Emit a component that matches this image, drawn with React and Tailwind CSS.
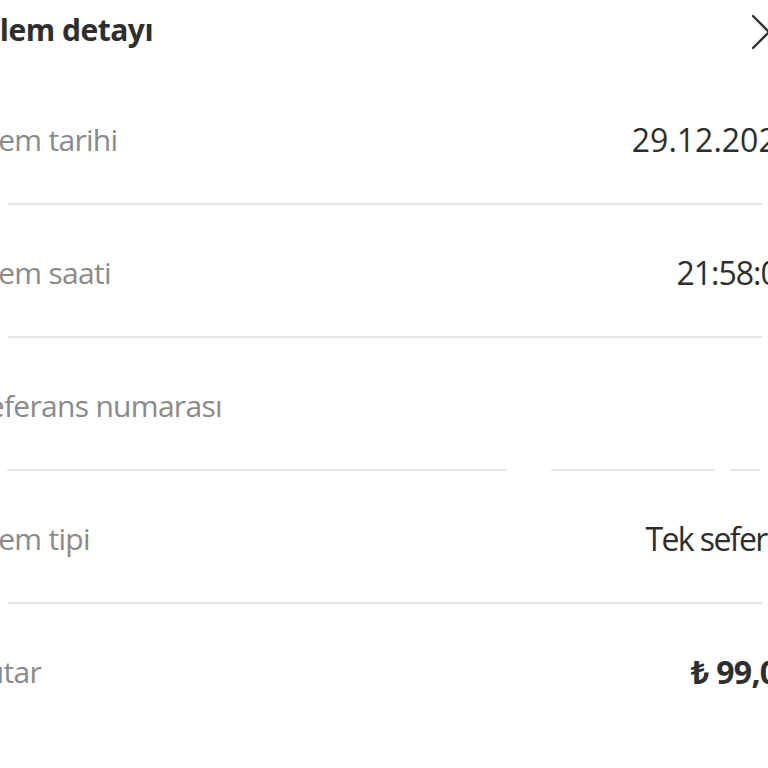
import React from "react";

const rows = [
  { label: "İşlem tarihi", value: "29.12.2024", vcls: "tracking-[0px]" },
  { label: "İşlem saati", value: "21:58:03", vcls: "tracking-[-1px]" },
  { label: "Referans numarası", value: "", gaps: true, vcls: "" },
  { label: "İşlem tipi", value: "Tek seferlik", vcls: "tracking-[-1.6px]" },
  { label: "Tutar", value: "₺ 99,00", bold: true, last: true, vcls: "tracking-[-0.7px]" },
];

function Divider({ gaps }) {
  if (gaps) {
    return (
      <div className="ml-[31px] mr-[35px] flex h-[2px]">
        <div className="h-[2px] w-[500px] bg-[#e6e6e6]" />
        <div className="h-[2px] w-[44px]" />
        <div className="h-[2px] w-[164px] bg-[#e6e6e6]" />
        <div className="h-[2px] w-[15px]" />
        <div className="h-[2px] flex-1 bg-[#e6e6e6]" />
      </div>
    );
  }
  return <div className="ml-[32px] mr-[33px] h-[2px] bg-[#e6e6e6]" />;
}

export default function App() {
  return (
    <div
      className="relative h-[768px] w-[768px] overflow-hidden bg-white"
      style={{ fontFamily: '"Open Sans", "Noto Sans", sans-serif' }}
    >
      <div className="ml-[-24px] w-[819px]">
        <div className="flex items-center justify-between pt-[10px] pb-[22px]">
          <div className="text-[30px] font-bold leading-[40px] tracking-[-0.5px] text-[#2e2e2e]">
            İşlem detayı
          </div>
          <svg className="mr-[8px] mt-[4px]" width="36" height="36" viewBox="0 0 36 36" fill="none">
            <path d="M2 2 L34 34 M34 2 L2 34" stroke="#333" strokeWidth="2.4" strokeLinecap="round" />
          </svg>
        </div>
        {rows.map((r) => (
          <div key={r.label}>
            <div className="flex items-center justify-between pt-[48px] pb-[43px]">
              <div className="ml-[-6px] text-[30px] leading-[40px] tracking-[-0.7px] text-[#8a8a8a]">{r.label}</div>
              <div
                className={
                  (r.bold
                    ? "text-[32px] font-bold leading-[40px] text-[#2e2e2e] "
                    : "text-[32px] leading-[40px] text-[#2e2e2e] ") + r.vcls
                }
              >
                {r.value}
              </div>
            </div>
            {!r.last && <Divider gaps={r.gaps} />}
          </div>
        ))}
      </div>
    </div>
  );
}
